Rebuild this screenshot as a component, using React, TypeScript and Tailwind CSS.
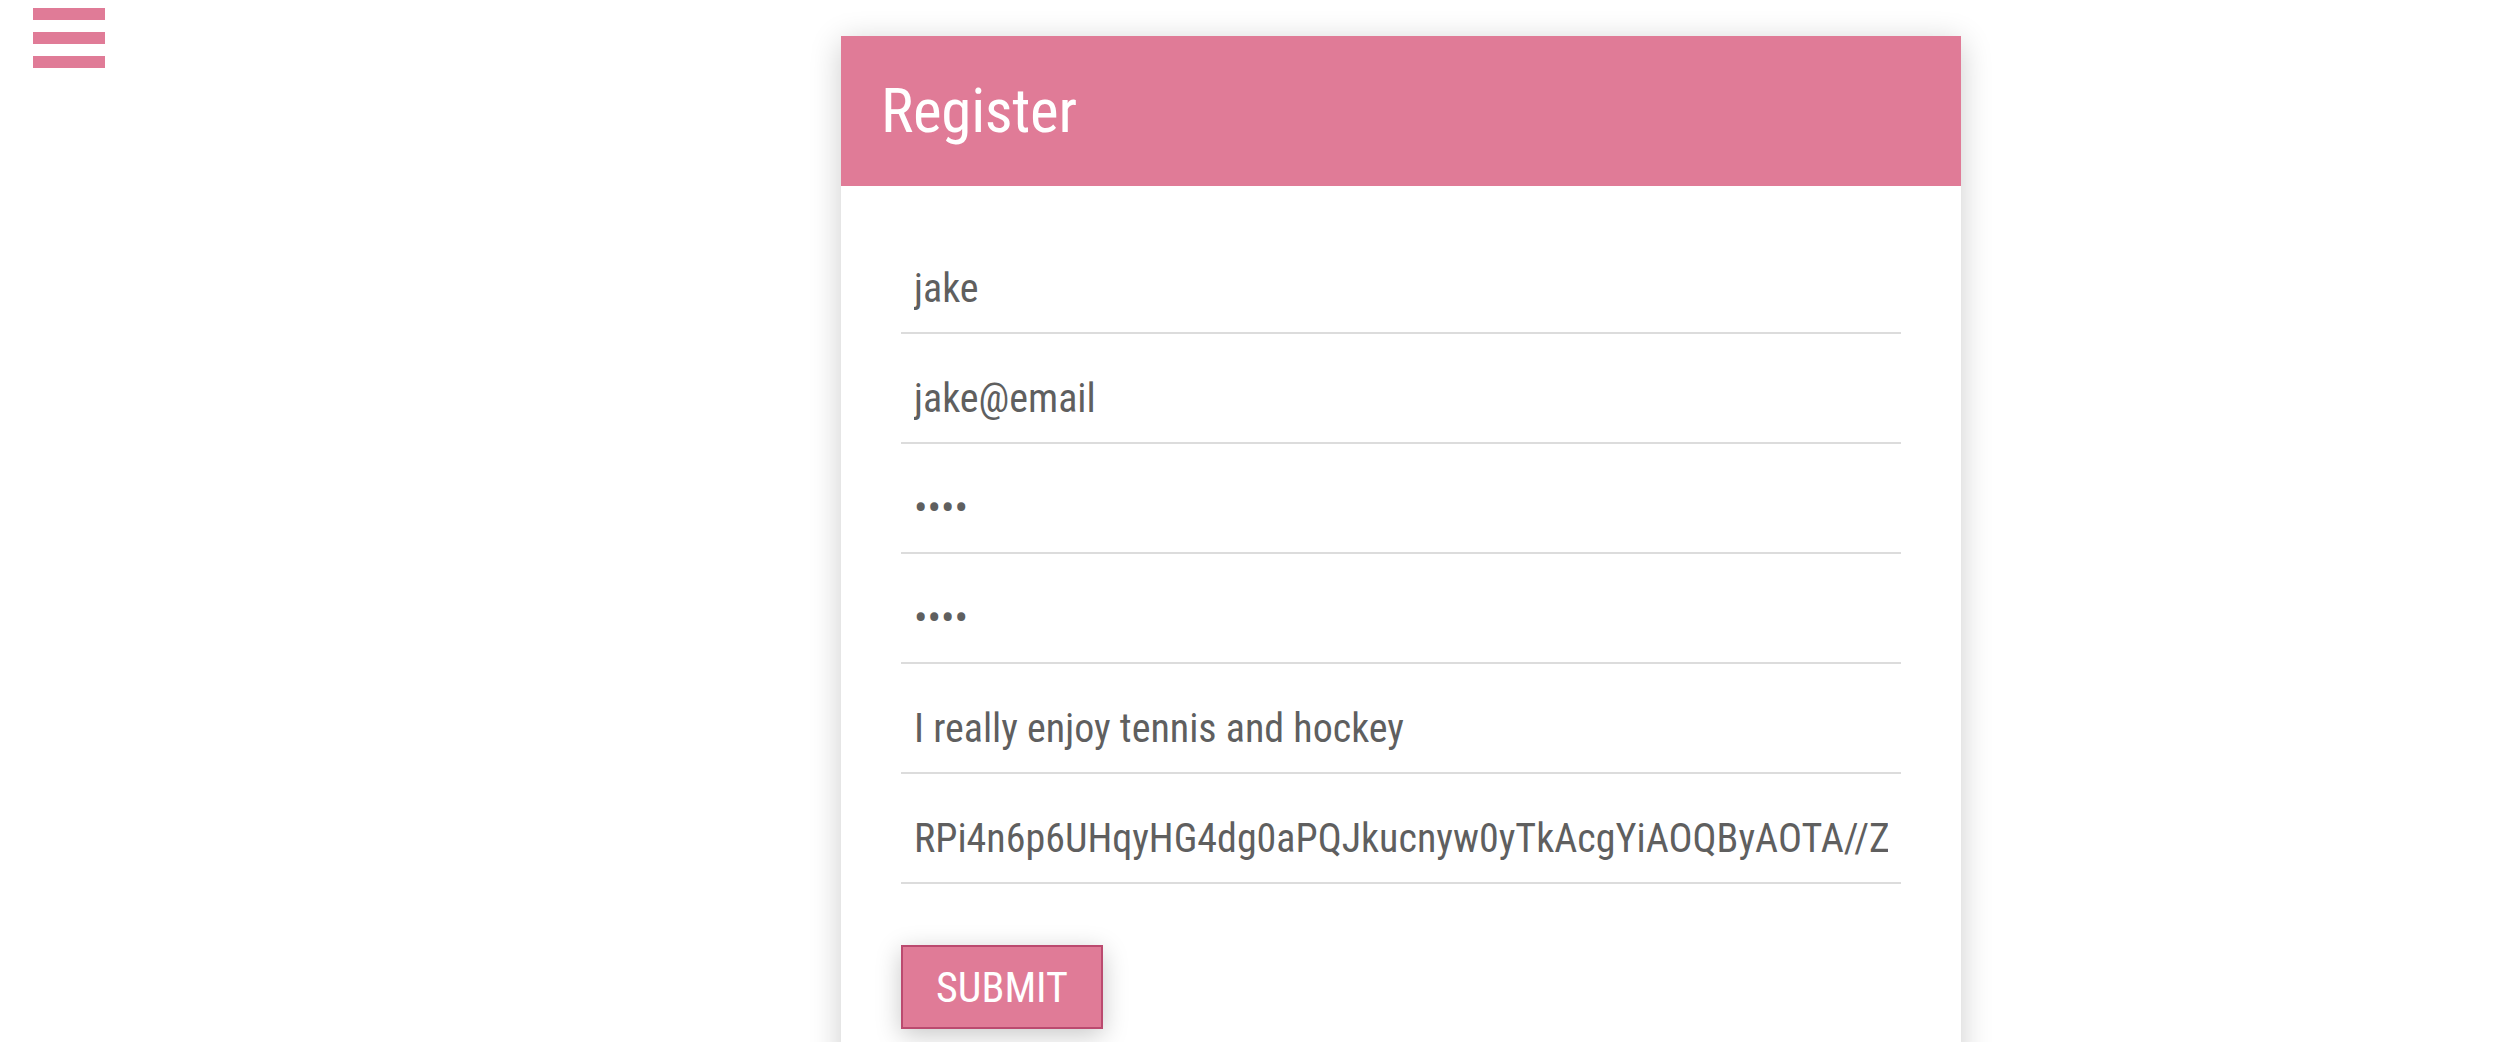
import React from "react";

const fields = [
  { type: "text", value: "jake" },
  { type: "email", value: "jake@email" },
  { type: "password", value: "1234" },
  { type: "password", value: "1234" },
  { type: "text", value: "I really enjoy tennis and hockey" },
  { type: "text", value: "RPi4n6p6UHqyHG4dg0aPQJkucnyw0yTkAcgYiAOQByAOTA//Z" },
];

export default function App() {
  return (
    <div
      className="relative h-[1042px] overflow-hidden bg-white"
      style={{ fontFamily: '"Roboto Condensed", Roboto, "Liberation Sans", sans-serif' }}
    >
      {/* Menu toggle */}
      <button className="absolute left-[33px] top-[8px] flex flex-col gap-[12px]">
        <span className="block w-[72px] h-[12px] bg-[#e07b97]" />
        <span className="block w-[72px] h-[12px] bg-[#e07b97]" />
        <span className="block w-[72px] h-[12px] bg-[#e07b97]" />
      </button>

      <div className="pt-[36px] pl-[841px]">
        <div className="w-[1120px] bg-white shadow-[0_6px_30px_rgba(0,0,0,0.2)]">
          {/* Header */}
          <div className="h-[150px] bg-[#e07b97] flex items-center px-[40px]">
            <h1 className="text-[61px] leading-none tracking-[-0.3px] text-white font-normal [font-stretch:condensed]">
              Register
            </h1>
          </div>

          {/* Form */}
          <form className="px-[60px] pt-[38px] pb-[40px]">
            {fields.map((f, i) => (
              <input
                key={i}
                type={f.type}
                defaultValue={f.value}
                readOnly
                className="block w-full h-[110px] pt-[20px] px-[13px] border-b-2 border-[#dcdcdc] bg-transparent text-[40px] text-[#5f5f5f] outline-none [font-stretch:condensed]"
              />
            ))}
            <button
              type="button"
              className="mt-[61px] w-[202px] h-[84px] bg-[#e07b97] border-2 border-[#bb4a6f] text-white text-[42px] uppercase shadow-[0_6px_24px_rgba(0,0,0,0.22)] [font-stretch:condensed]"
            >
              Submit
            </button>
          </form>
        </div>
      </div>
    </div>
  );
}
